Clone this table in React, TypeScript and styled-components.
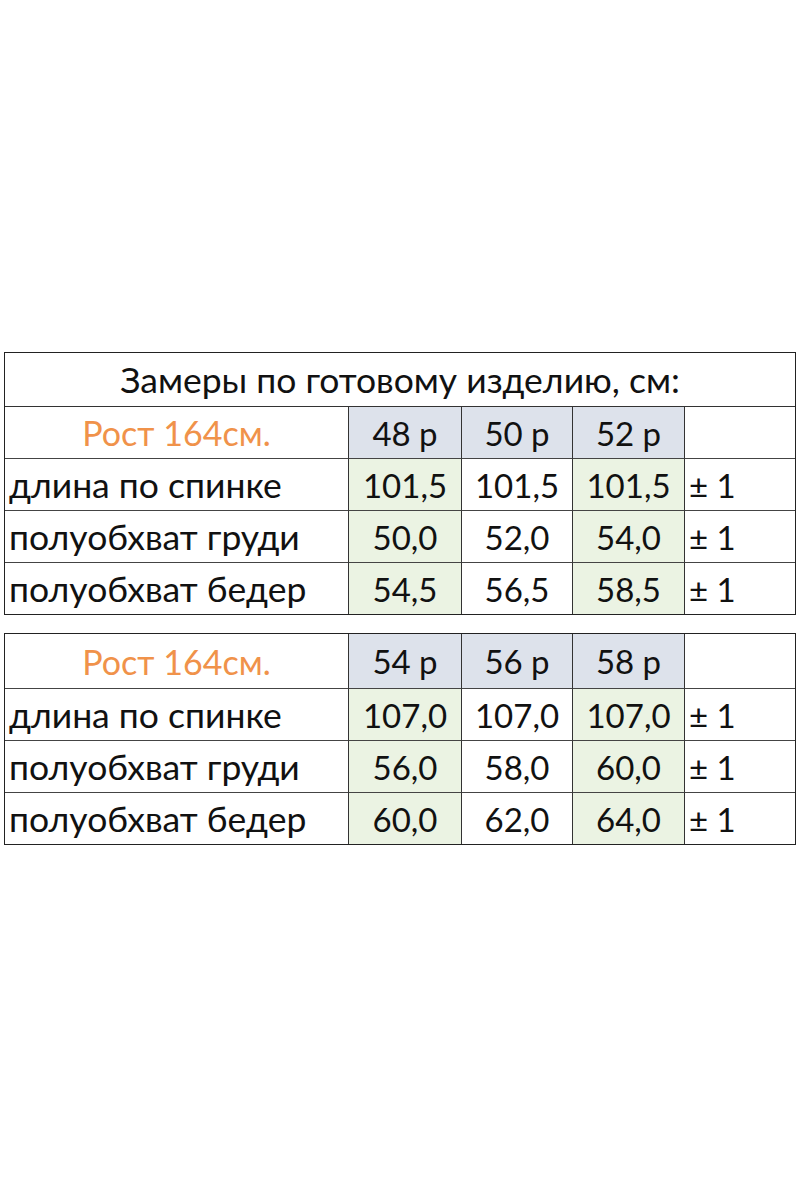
import { FC } from "react";
import styled, { createGlobalStyle } from "styled-components";

interface ISizeTable {
  height: string;
  sizes: string[];
  rows: { label: string; values: string[] }[];
}

const tables: ISizeTable[] = [
  {
    height: "Рост 164см.",
    sizes: ["48 р", "50 р", "52 р"],
    rows: [
      { label: "длина по спинке", values: ["101,5", "101,5", "101,5"] },
      { label: "полуобхват груди", values: ["50,0", "52,0", "54,0"] },
      { label: "полуобхват бедер", values: ["54,5", "56,5", "58,5"] },
    ],
  },
  {
    height: "Рост 164см.",
    sizes: ["54 р", "56 р", "58 р"],
    rows: [
      { label: "длина по спинке", values: ["107,0", "107,0", "107,0"] },
      { label: "полуобхват груди", values: ["56,0", "58,0", "60,0"] },
      { label: "полуобхват бедер", values: ["60,0", "62,0", "64,0"] },
    ],
  },
];

const GlobalStyle = createGlobalStyle`
  body {
    margin: 0;
    background: #fff;
    font-family: Lato, "Open Sans", sans-serif;
    color: #111;
  }
`;

const StyledPage = styled.div`
  width: 800px;
  height: 1200px;
  padding: 352px 4px 0 4px;
  box-sizing: border-box;
  display: flex;
  flex-direction: column;
  gap: 18px;
`;

const StyledTable = styled.div`
  display: grid;
  grid-template-columns: 344px 113px 111px 112px 1fr;
  border: 1.5px solid #222;
  box-sizing: border-box;
`;

const StyledTitle = styled.div`
  grid-column: 1 / -1;
  height: 53px;
  display: flex;
  align-items: center;
  justify-content: center;
  font-size: 35.5px;
  border-bottom: 1px solid #333;
`;

const StyledCell = styled.div<{
  $bg?: string;
  $align?: "left" | "center";
  $size?: number;
  $last?: boolean;
  $bottom?: boolean;
  $tall?: boolean;
}>`
  height: ${(p) => (p.$tall ? "54px" : "51px")};
  display: flex;
  align-items: center;
  justify-content: ${(p) => (p.$align === "left" ? "flex-start" : "center")};
  padding: ${(p) => (p.$align === "left" ? "0 0 0 4px" : "0")};
  background: ${(p) => p.$bg || "transparent"};
  border-right: ${(p) => (p.$last ? "none" : "1px solid #333")};
  border-bottom: ${(p) => (p.$bottom ? "none" : "1px solid #444")};
  font-size: ${(p) => p.$size || 33}px;
  white-space: nowrap;
`;

const StyledHeight = styled.span`
  color: #f0924a;
  font-size: 34px;
`;

const HEADER_BG = "#dde2eb";
const GREEN_BG = "#ebf3e3";

const SizeTable: FC<{ table: ISizeTable; title?: string }> = ({ table, title }) => {
  return (
    <StyledTable>
      {title && <StyledTitle>{title}</StyledTitle>}
      <StyledCell $tall={!title}>
        <StyledHeight>{table.height}</StyledHeight>
      </StyledCell>
      {table.sizes.map((s) => (
        <StyledCell key={s} $bg={HEADER_BG} $tall={!title}>
          {s}
        </StyledCell>
      ))}
      <StyledCell $last $tall={!title} />
      {table.rows.map((row, i) => {
        const bottom = i === table.rows.length - 1;
        return [
          <StyledCell key={row.label} $align="left" $size={35.5} $bottom={bottom}>
            {row.label}
          </StyledCell>,
          ...row.values.map((v, j) => (
            <StyledCell
              key={row.label + j}
              $bg={j === 1 ? undefined : GREEN_BG}
              $bottom={bottom}
            >
              {v}
            </StyledCell>
          )),
          <StyledCell key={row.label + "tol"} $align="left" $last $bottom={bottom}>
            ± 1
          </StyledCell>,
        ];
      })}
    </StyledTable>
  );
};

const App: FC = () => {
  return (
    <>
      <GlobalStyle />
      <StyledPage>
        <SizeTable table={tables[0]} title="Замеры по готовому изделию, см:" />
        <SizeTable table={tables[1]} />
      </StyledPage>
    </>
  );
};

export default App;
